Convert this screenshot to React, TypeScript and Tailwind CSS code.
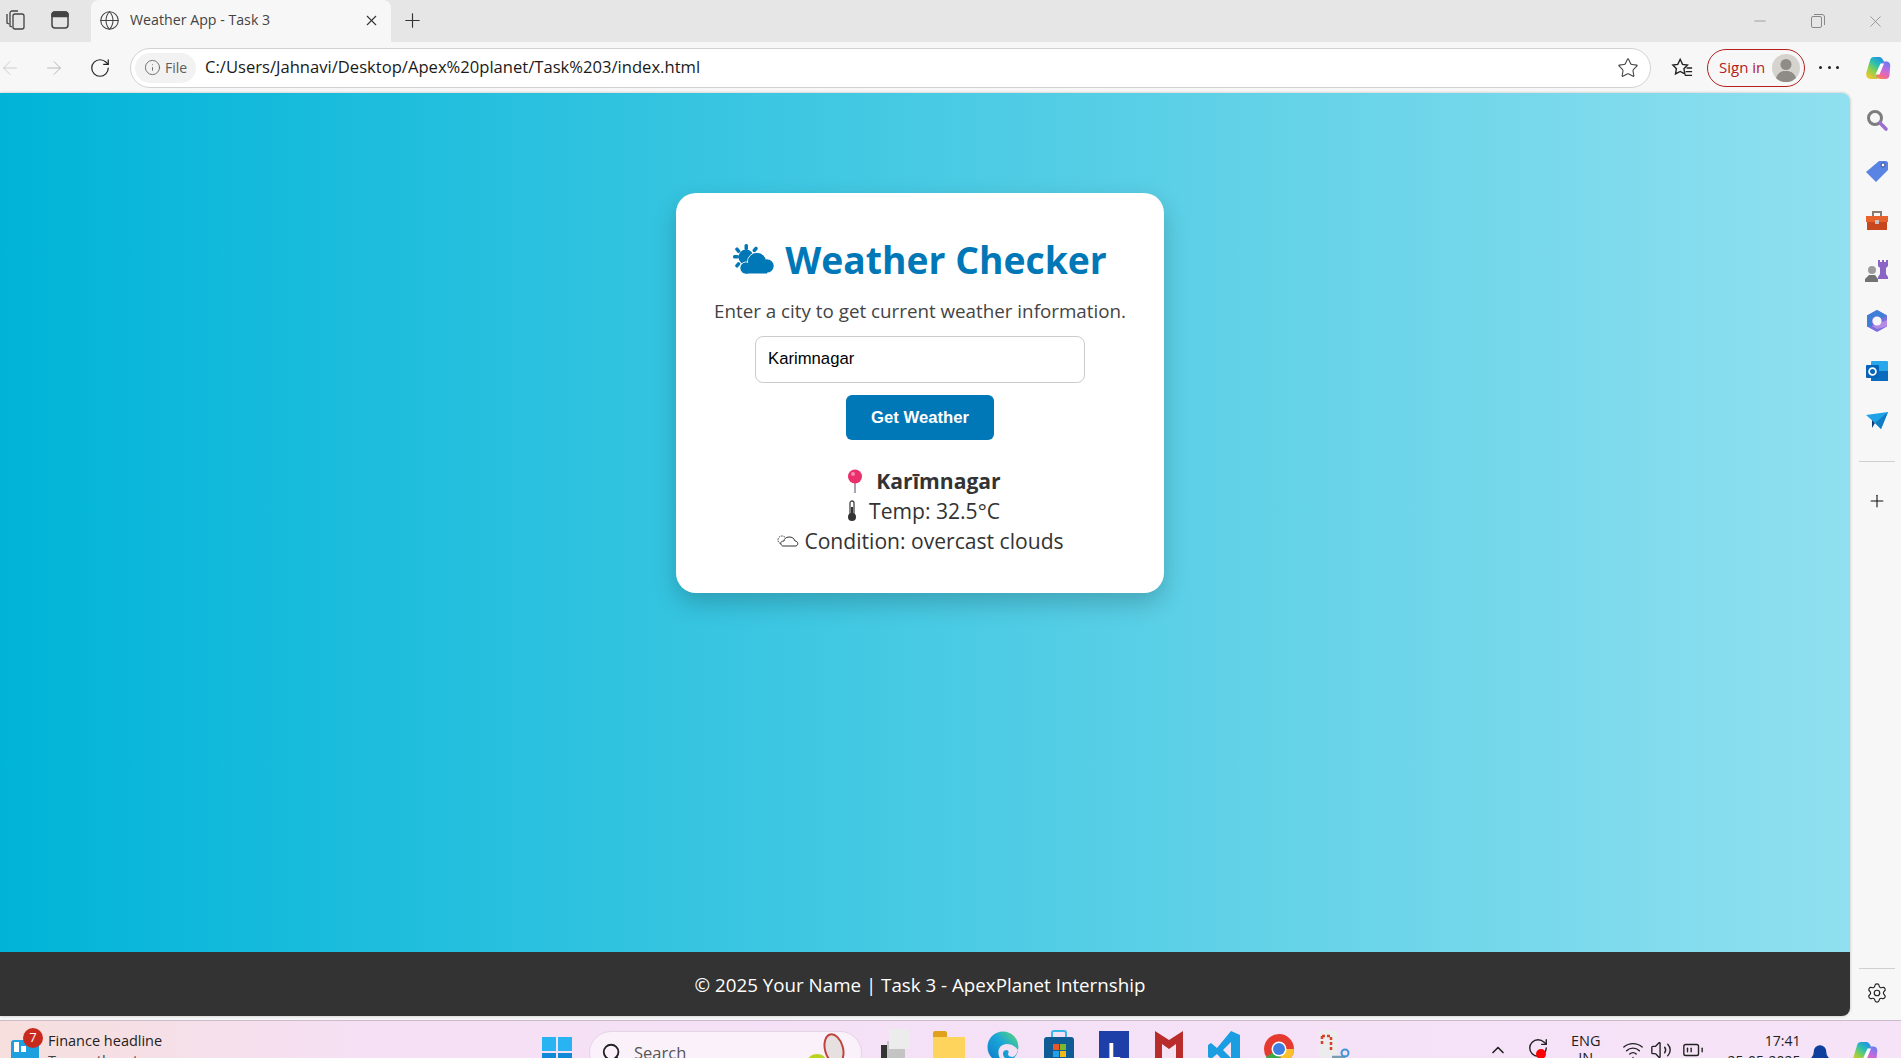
import { ArrowLeft, ArrowRight, RotateCw, Info, Star, X, Plus, Minus, Globe, Settings, Search, ChevronUp, Wifi, Volume2, BatteryMedium, Bell } from "lucide-react";

const uiFont = "font-['Open_Sans','Noto_Sans',sans-serif]";

const CopilotIcon = ({ size = 28 }: { size?: number }) => (
  <svg width={size} height={size} viewBox="0 0 28 28">
    <defs>
      <linearGradient id="copA" x1="0.8" y1="0" x2="0.2" y2="1">
        <stop offset="0" stopColor="#1f8fe8" />
        <stop offset="0.35" stopColor="#2cc0b0" />
        <stop offset="0.65" stopColor="#8ed04a" />
        <stop offset="1" stopColor="#f7c530" />
      </linearGradient>
      <linearGradient id="copB" x1="0.7" y1="0" x2="0.3" y2="1">
        <stop offset="0" stopColor="#6a7df0" />
        <stop offset="0.45" stopColor="#c06be0" />
        <stop offset="0.8" stopColor="#f2689a" />
        <stop offset="1" stopColor="#f58a4a" />
      </linearGradient>
    </defs>
    <path d="M20 8c-1-3-2.500-5-5-5H10C7.500 3 6.500 4.500 6 6.500L2.500 18c-1 4 .5 7 4.500 7h5c2 0 3-1 3.600-3z" fill="url(#copA)" />
    <path d="M12 22c1 2 2.500 3 5 3h4.500c2.500 0 3.500-1.500 4-3.500L26 14c1-4-.5-6.500-4-6.500h-3z" fill="url(#copB)" />
    <path d="M16.500 9.500H20L15.500 20.500H11.500z" fill="#fff" />
  </svg>
);

const SidebarIcons = () => (
  <div className="flex flex-col items-center">
    <svg width="24" height="24" viewBox="0 0 24 24" className="mt-[15px]">
      <circle cx="10" cy="10" r="6.5" fill="none" stroke="#7d7d7d" strokeWidth="3" />
      <path d="M15 15l6 6" stroke="#9a6fd0" strokeWidth="3.6" strokeLinecap="round" />
    </svg>
    <svg width="24" height="24" viewBox="0 0 24 24" className="mt-[27px]">
      <path d="M14 2h7c1 0 2 1 2 2v7L11 23 1 13z" fill="#5a84e4" />
      <circle cx="18" cy="6" r="2" fill="#fff" stroke="#33489c" />
    </svg>
    <svg width="24" height="24" viewBox="0 0 24 24" className="mt-[26px]">
      <path d="M8 7V3h8v4" fill="none" stroke="#8a7a70" strokeWidth="2" />
      <rect x="1" y="7" width="22" height="6" fill="#e8622c" />
      <rect x="2" y="13" width="20" height="8" fill="#c9471f" />
      <rect x="10" y="11" width="4" height="4" fill="#c4c4c4" />
    </svg>
    <svg width="24" height="24" viewBox="0 0 24 24" className="mt-[26px]">
      <path d="M13 1h2v2h2V1h2v2h2V1h2v6l-2 2v6l2 3v2H13v-2l2-3V9l-2-2z" fill="#8b65c4" />
      <circle cx="7" cy="11" r="4" fill="#9c9c9c" />
      <path d="M4 16h6l3 4v3H0v-3z" fill="#737373" />
    </svg>
    <svg width="24" height="24" viewBox="0 0 24 24" className="mt-[26px]">
      <path d="M12 1l10 5.500v11L12 23 2 17.500v-11z" fill="#7a6fdc" />
      <path d="M12 1l10 5.500-5 3-5-3-5 3v8l-5-.1v-11z" fill="#3f7fd8" />
      <path d="M7 17l5 3 10-2.500V11l-5 2z" fill="#b58be6" />
      <circle cx="12" cy="12" r="4.600" fill="#f7f7f7" />
    </svg>
    <svg width="24" height="24" viewBox="0 0 24 24" className="mt-[26px]">
      <rect x="6" y="2" width="17" height="20" rx="1" fill="#28a8ea" />
      <path d="M6 12h17v10H6z" fill="#0a6cbd" />
      <rect x="1" y="6" width="13" height="13" rx="1" fill="#0564b8" />
      <circle cx="7.500" cy="12.500" r="3.400" fill="none" stroke="#fff" strokeWidth="1.800" />
    </svg>
    <svg width="24" height="24" viewBox="0 0 24 24" className="mt-[26px]">
      <path d="M1 6l22-3-7 17-6-6z" fill="#1fa3e6" />
      <path d="M10 14l13-11-7 17z" fill="#0f7cc4" />
      <path d="M7 11l3 3-3 5z" fill="#0b3f78" />
    </svg>
    <div className="mt-[28px] h-px w-[36px] bg-[#d0d0d0]" />
    <Plus size={20} strokeWidth={1.3} className="mt-[29px] text-[#111]" />
  </div>
);

const Taskbar = () => (
  <div className={`flex h-[38px] shrink-0 items-start overflow-hidden border-t border-[#cbbccb] bg-[linear-gradient(to_right,#f6dfdc,#f5e0f6_20%,#f6e3f8)] ${uiFont}`}>
    <div className="relative ml-[11px] mt-[19px] h-[30px] w-[28px] shrink-0 rounded-[3px] bg-[#1d9fe0]">
      <div className="absolute left-[3px] top-[2px] h-[10px] w-[5px] bg-white" />
      <div className="absolute left-[10px] top-[6px] h-[6px] w-[5px] bg-white" />
      <div className="absolute -right-[4px] -top-[12px] flex h-[20px] w-[20px] items-center justify-center rounded-full bg-[#c92a1e] text-[13px] text-white">7</div>
    </div>
    <div className="ml-[9px] mt-[10px] w-[130px] shrink-0 text-[14.5px] leading-[20px] text-[#222]">
      <div>Finance headline</div>
      <div className="text-[#444]">Trump threatens</div>
    </div>
    <div className="ml-[364px] mt-[16px] grid h-[30px] w-[30px] shrink-0 grid-cols-2 gap-[2px]">
      <div className="bg-[#28b4f2]" />
      <div className="bg-[#28b4f2]" />
      <div className="bg-[#1089d8]" />
      <div className="bg-[#1089d8]" />
    </div>
    <div className="relative ml-[17px] mt-[10px] flex h-[44px] w-[273px] shrink-0 items-start rounded-full border border-[#e4d5e4] bg-[#faf1fb] pl-[11px] pt-[9px]">
      <Search size={22} strokeWidth={2} className="mt-[1px] text-[#222]" />
      <span className="ml-[11px] text-[16.5px] leading-[24px] text-[#555]">Search</span>
      <svg width="44" height="44" viewBox="0 0 44 44" className="absolute right-[12px] top-0">
        <circle cx="12" cy="33" r="11" fill="#b9d420" />
        <ellipse cx="29" cy="17" rx="9" ry="15" fill="#e6e0e0" stroke="#c0443c" strokeWidth="2" transform="rotate(-15 29 17)" />
      </svg>
    </div>
    <div className="ml-[19px] mt-[8px] flex shrink-0 items-start">
      <div className="relative h-[40px] w-[30px]">
        <div className="absolute bottom-0 left-0 h-[24px] w-[22px] bg-[#333]" />
        <div className="absolute left-[6px] top-[12px] h-[18px] w-[18px] bg-[#c4c4c4]" />
        <div className="absolute left-[8px] top-0 h-[20px] w-[20px] bg-[#ececec]" />
      </div>
      <div className="relative ml-[22px] mt-[2px] h-[40px] w-[32px]">
        <div className="absolute left-0 top-0 h-[10px] w-[14px] rounded-t-[2px] bg-[#e0a21c]" />
        <div className="absolute inset-x-0 top-[6px] h-[34px] bg-[#ffd45c]" />
        <div className="absolute bottom-0 left-[6px] h-[6px] w-[20px] rounded-t-[3px] bg-[#2b8fd8]" />
      </div>
      <svg width="34" height="40" viewBox="0 0 34 40" className="ml-[21px]">
        <defs>
          <linearGradient id="edgeG" x1="0" y1="1" x2="1" y2="0">
            <stop offset="0" stopColor="#0c78c8" />
            <stop offset="0.55" stopColor="#1aa6d8" />
            <stop offset="1" stopColor="#5fdc72" />
          </linearGradient>
        </defs>
        <circle cx="17" cy="18" r="15.500" fill="url(#edgeG)" />
        <path d="M13 27c-2-6 1-12 8-12 5 0 9 3 11 6-1 4-3 6-5 7-3 0-5-1-5-3 1-2 1-4-2-4-3 .5-4 4-2 7 2 2 4 3 5 6h-6c-2-1-3-4-4-7z" fill="#f3e0f4" />
      </svg>
      <div className="relative ml-[24px] mt-[1px] h-[40px] w-[30px]">
        <div className="absolute left-[7px] top-0 h-[10px] w-[16px] rounded-t-[3px] border-2 border-b-0 border-[#35b8e8]" />
        <div className="absolute inset-x-0 top-[7px] h-[33px] rounded-t-[3px] bg-[#0f5c94]" />
        <div className="absolute left-[9px] top-[14px] grid h-[13px] w-[13px] grid-cols-2 gap-[1px]">
          <div className="bg-[#e8562a]" />
          <div className="bg-[#7cb82c]" />
          <div className="bg-[#1fa2ea]" />
          <div className="bg-[#f2b91c]" />
        </div>
      </div>
      <div className="ml-[25px] mt-[2px] flex h-[40px] w-[30px] justify-center bg-[#1e3fa8] pt-[6px] text-[24px] font-bold leading-[28px] text-white">L</div>
      <svg width="28" height="40" viewBox="0 0 28 40" className="ml-[26px] mt-[2px]">
        <path d="M0 0l14 9L28 0v30L14 40 0 30z" fill="#b82c2c" />
        <path d="M7 13l7 5 7-5v18l-7 5-7-5z" fill="#f5e2f2" />
      </svg>
      <svg width="32" height="40" viewBox="0 0 32 40" className="ml-[25px] mt-[2px]">
        <path d="M23 0l9 4v30l-9 4-14-15-6 5-3-2v-12l3-2 6 5z" fill="#1b9de2" />
        <path d="M23 11l-8 8 8 8z" fill="#f5e2f2" />
      </svg>
      <svg width="32" height="40" viewBox="0 0 32 40" className="ml-[23px] mt-[2px]">
        <circle cx="16" cy="18" r="15" fill="#e53a2f" />
        <path d="M16 18L3 26a15 15 0 0 0 16 7z" fill="#3aa84a" />
        <path d="M16 18h15a15 15 0 0 1-12 15z" fill="#fbc02d" />
        <circle cx="16" cy="18" r="7.500" fill="#fff" />
        <circle cx="16" cy="18" r="6" fill="#3d7fe0" />
      </svg>
      <svg width="32" height="40" viewBox="0 0 32 40" className="ml-[23px] mt-[2px]">
        <rect x="1" y="0" width="18" height="26" rx="2" fill="#ececec" />
        <path d="M4 5h9v14" fill="none" stroke="#d9402c" strokeWidth="2.500" strokeDasharray="3 2" />
        <path d="M4 5v9" fill="none" stroke="#d9402c" strokeWidth="2.500" strokeDasharray="3 2" />
        <path d="M14 26h13" stroke="#7a9bb0" strokeWidth="2.500" />
        <circle cx="27" cy="22" r="3.500" fill="none" stroke="#3d96d8" strokeWidth="2" />
      </svg>
    </div>
    <div className="ml-[138px] mt-[19px] flex shrink-0 items-start text-[#222]">
      <ChevronUp size={20} strokeWidth={2} />
      <div className="relative ml-[19px] -mt-[3px] h-[30px] w-[24px]">
        <RotateCw size={22} strokeWidth={1.5} />
        <div className="absolute left-[9px] top-[12px] h-[10px] w-[10px] rounded-full bg-[#f00]" />
      </div>
      <div className="ml-[20px] -mt-[8px] text-[14.5px] leading-[17px]">
        <div>ENG</div>
        <div className="text-center">IN</div>
      </div>
      <Wifi size={22} strokeWidth={1.500} className="ml-[21px] -mt-[1px]" />
      <Volume2 size={22} strokeWidth={1.500} className="ml-[6px] -mt-[1px]" />
      <BatteryMedium size={22} strokeWidth={1.500} className="ml-[10px] -mt-[1px]" />
    </div>
    <div className="ml-[21px] mt-[10px] w-[76px] shrink-0 whitespace-nowrap text-right text-[14px] leading-[20px] text-[#222]">
      <div>17:41</div>
      <div>25-05-2025</div>
    </div>
    <Bell size={22} fill="#0f3f9c" strokeWidth={1.500} className="ml-[8px] mt-[23px] shrink-0 text-[#0f3f9c]" />
    <div className="ml-[20px] mt-[18px] shrink-0">
      <CopilotIcon size={28} />
    </div>
  </div>
);

const App = () => {
  return (
    <div className="flex h-[1058px] w-[1901px] flex-col overflow-hidden bg-[#f7f7f7]">
      {/* tab strip */}
      <div className={`flex h-[42px] shrink-0 items-end bg-[#e6e6e6] pl-[4px] ${uiFont}`}>
        <div className="flex h-[42px] items-center pb-[2px]">
          <svg width="22" height="22" viewBox="0 0 22 22" fill="none" stroke="#444" strokeWidth="1.300" className="ml-[1px]">
            <rect x="8" y="5" width="11" height="15" rx="2" />
            <path d="M7 18l-2-1V4c0-1 1-2 2-2h6" />
            <path d="M4 15l-2-1V5" />
          </svg>
          <svg width="20" height="20" viewBox="0 0 20 20" fill="none" stroke="#444" strokeWidth="1.500" className="ml-[23px]">
            <rect x="2" y="2" width="16" height="16" rx="3" />
            <path d="M2 6.500h16V5c0-2-1-3-3-3H5C3 2 2 3 2 5z" fill="#444" />
          </svg>
        </div>
        <div className="ml-[21px] flex h-[42px] w-[300px] items-center rounded-t-[8px] bg-[#f7f7f7] pb-[2px] pl-[8px] pr-[11px]">
          <Globe size={21} strokeWidth={1.200} className="text-[#444]" />
          <span className="ml-[10px] text-[14.2px] text-[#444]">Weather App - Task 3</span>
          <X size={17} strokeWidth={1.500} className="ml-auto text-[#333]" />
        </div>
        <div className="flex h-[42px] items-center pb-[2px] pl-[10px]">
          <Plus size={23} strokeWidth={1.200} className="text-[#333]" />
        </div>
        <div className="ml-auto flex h-[42px] items-center">
          <Minus size={18} strokeWidth={1} className="text-[#888]" />
          <svg width="16" height="16" viewBox="0 0 16 16" fill="none" stroke="#888" className="ml-[41px]">
            <rect x="1.500" y="3.500" width="10" height="11" rx="1.500" />
            <path d="M4 1.500h8c1.500 0 2.500 1 2.500 2.500v8" />
          </svg>
          <X size={19} strokeWidth={1} className="ml-[40px] mr-[16px] text-[#888]" />
        </div>
      </div>

      {/* address bar */}
      <div className={`flex h-[51px] shrink-0 items-center ${uiFont}`}>
        <ArrowLeft size={22} strokeWidth={1} className="-ml-[1px] text-[#c8c8c8]" />
        <ArrowRight size={22} strokeWidth={1} className="ml-[22px] text-[#b4b4b4]" />
        <RotateCw size={22} strokeWidth={1.300} className="ml-[24px] text-[#222]" />
        <div className="ml-[19px] flex h-[40px] w-[1521px] items-center rounded-full border border-[#d2d2d2] bg-white pl-[4px] pr-[11px]">
          <div className="flex h-[30px] w-[61px] items-center justify-center gap-[4px] rounded-full bg-[#f2f2f2] text-[14px] text-[#5d5d5d]">
            <Info size={17} strokeWidth={1.200} />
            File
          </div>
          <span className="ml-[9px] whitespace-nowrap text-[16.6px] text-[#1a1a1a]">C:/Users/Jahnavi/Desktop/Apex%20planet/Task%203/index.html</span>
          <Star size={22} strokeWidth={1.200} className="ml-auto text-[#444]" />
        </div>
        <svg width="22" height="22" viewBox="0 0 24 24" fill="none" stroke="#222" strokeWidth="1.500" className="ml-[20px]">
          <path d="M10 2.500l2.600 5.500 5.400.8-3.900 3.900 1 5.800-5.100-2.700-5.100 2.700 1-5.800L2 8.800l5.400-.8z" />
          <path d="M17 12h6M16 16h7M15 20h8" />
        </svg>
        <div className="ml-[14px] flex h-[38px] w-[98px] items-center justify-between rounded-full border border-[#b42020] pl-[11px] pr-[4px] text-[15px] text-[#b42020]">
          Sign in
          <svg width="28" height="28" viewBox="0 0 28 28">
            <circle cx="14" cy="14" r="14" fill="#d5d3ce" />
            <circle cx="14" cy="10.500" r="5.500" fill="#8f8c88" />
            <path d="M4 24c2-6 6-7 10-7s8 1 10 7a14 14 0 0 1-20 0z" fill="#8f8c88" />
          </svg>
        </div>
        <div className="ml-[14px] flex w-[20px] justify-between">
          <div className="h-[3px] w-[3px] rounded-full bg-[#222]" />
          <div className="h-[3px] w-[3px] rounded-full bg-[#222]" />
          <div className="h-[3px] w-[3px] rounded-full bg-[#222]" />
        </div>
        <div className="ml-[25px]">
          <CopilotIcon size={28} />
        </div>
      </div>

      {/* page + edge sidebar */}
      <div className="flex h-[923px] shrink-0">
        <div className="flex w-[1850px] flex-col overflow-hidden rounded-r-[8px] shadow-[0_0_3px_rgba(0,0,0,0.25)]">
          <div className="flex flex-1 justify-center bg-[linear-gradient(to_right,#00b4d8,#90e0ef)] pr-[10px] pt-[100px]">
            <div className={`flex h-[400px] w-[488px] flex-col items-center rounded-[20px] bg-white pt-[40px] shadow-[0_10px_25px_rgba(0,0,0,0.2)] ${uiFont}`}>
              <div className="flex h-[53px] items-center text-[#0077b6]">
                <svg width="42" height="32" viewBox="0 0 42 32" className="mr-[10px]">
                  <g fill="#0077b6">
                    <rect x="11.500" y="0" width="3.500" height="6" rx="1.500" />
                    <rect x="3" y="3" width="3.500" height="6" rx="1.500" transform="rotate(-40 5 6)" />
                    <rect x="0" y="11" width="6" height="3.500" rx="1.500" />
                    <rect x="3" y="18" width="3.500" height="6" rx="1.500" transform="rotate(40 5 21)" />
                    <rect x="20" y="2.500" width="3.500" height="6" rx="1.500" transform="rotate(40 22 6)" />
                    <circle cx="13" cy="13" r="7.500" />
                    <g stroke="#fff" strokeWidth="1">
                      <circle cx="24" cy="18" r="9.500" />
                      <circle cx="13" cy="24" r="6" />
                      <circle cx="34" cy="22" r="7" />
                    </g>
                    <circle cx="24" cy="18" r="9" />
                    <circle cx="13" cy="24" r="5.500" />
                    <circle cx="34" cy="22" r="6.500" />
                    <rect x="13" y="20" width="21" height="9.500" />
                  </g>
                </svg>
                <span className="text-[37.3px] font-bold leading-[53px]">Weather Checker</span>
              </div>
              <p className="mt-[12px] text-[18.8px] leading-[26px] text-[#444]">Enter a city to get current weather information.</p>
              <input
                readOnly
                value="Karimnagar"
                className="mt-[12px] h-[47px] w-[330px] rounded-[8px] border border-[#cccccc] px-[12px] pb-[2px] font-['Liberation_Sans',sans-serif] text-[16.7px] text-black outline-none"
              />
              <button className="mt-[12px] h-[45px] w-[148px] rounded-[6px] bg-[#0077b6] font-['Liberation_Sans',sans-serif] text-[16.7px] font-bold text-white">
                Get Weather
              </button>
              <div className="mt-[26px] flex flex-col items-center text-[21.1px] leading-[30px] text-[#333]">
                <div className="flex h-[30px] items-center pl-[8px] font-bold">
                  <svg width="16" height="24" viewBox="0 0 16 24" className="mr-[13px]">
                    <rect x="7" y="10" width="2" height="14" fill="#a9a3b5" />
                    <circle cx="8" cy="7.500" r="7" fill="#ea2f6c" />
                    <circle cx="6" cy="5" r="2" fill="#f78aa8" />
                  </svg>
                  Karīmnagar
                </div>
                <div className="flex h-[30px] items-center pl-[6px]">
                  <svg width="12" height="22" viewBox="0 0 12 22" className="mr-[11px]">
                    <rect x="4" y="1" width="4" height="14" rx="2" fill="none" stroke="#444" strokeWidth="1.300" />
                    <circle cx="6" cy="17" r="4" fill="#333" />
                    <rect x="5" y="7" width="2" height="8" fill="#333" />
                  </svg>
                  Temp: 32.5°C
                </div>
                <div className="flex h-[30px] items-center">
                  <svg width="23" height="14" viewBox="0 0 23 14" fill="none" stroke="#333" strokeWidth="1" className="mr-[5px]">
                    <circle cx="6" cy="6" r="4" strokeDasharray="1.500 1" />
                    <path d="M7 12h13c3-1 2-5-1-5-1-3-3-4-6-4-3 0-5 2-5 4-2 0-4 1-3 3 .2 1 1 2 2 2z" fill="#fff" />
                  </svg>
                  Condition: overcast clouds
                </div>
              </div>
            </div>
          </div>
          <div className={`flex h-[64px] items-center justify-center bg-[#333333] pr-[10px] pt-[2px] text-[18.75px] text-white ${uiFont}`}>
            © 2025 Your Name | Task 3 - ApexPlanet Internship
          </div>
        </div>
        <div className="flex w-[51px] flex-col items-center pl-[2px]">
          <SidebarIcons />
          <div className="mt-auto mb-[12px] flex flex-col items-center">
            <div className="mb-[13px] h-px w-[36px] bg-[#d0d0d0]" />
            <Settings size={22} strokeWidth={1.300} className="text-[#222]" />
          </div>
        </div>
      </div>

      <div className="h-[4px] shrink-0" />
      <Taskbar />
    </div>
  );
};

export default App;
